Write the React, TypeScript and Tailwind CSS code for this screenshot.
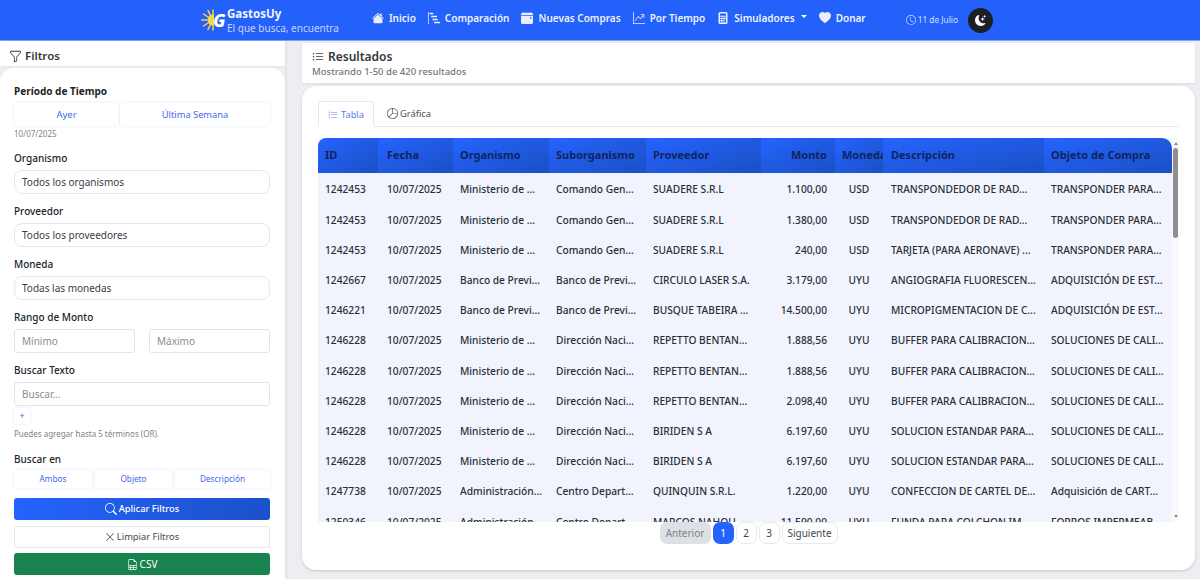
import React from "react";
import { BsHouseFill, BsBarChartSteps, BsCalendarEventFill, BsGraphUpArrow, BsCalculatorFill, BsHeartFill, BsClock, BsMoonStarsFill, BsFunnel, BsListUl, BsPieChart, BsSearch, BsXLg, BsFileEarmarkSpreadsheet } from "react-icons/bs";

const rows = [
  ["1242453","Ministerio de ...","Comando Gen...","SUADERE S.R.L","1.100,00","USD","TRANSPONDEDOR DE RAD...","TRANSPONDER PARA..."],
  ["1242453","Ministerio de ...","Comando Gen...","SUADERE S.R.L","1.380,00","USD","TRANSPONDEDOR DE RAD...","TRANSPONDER PARA..."],
  ["1242453","Ministerio de ...","Comando Gen...","SUADERE S.R.L","240,00","USD","TARJETA (PARA AERONAVE) ...","TRANSPONDER PARA..."],
  ["1242667","Banco de Previ...","Banco de Previ...","CIRCULO LASER S.A.","3.179,00","UYU","ANGIOGRAFIA FLUORESCEN...","ADQUISICIÓN DE EST..."],
  ["1246221","Banco de Previ...","Banco de Previ...","BUSQUE TABEIRA ...","14.500,00","UYU","MICROPIGMENTACION DE C...","ADQUISICIÓN DE EST..."],
  ["1246228","Ministerio de ...","Dirección Naci...","REPETTO BENTAN...","1.888,56","UYU","BUFFER PARA CALIBRACION...","SOLUCIONES DE CALI..."],
  ["1246228","Ministerio de ...","Dirección Naci...","REPETTO BENTAN...","1.888,56","UYU","BUFFER PARA CALIBRACION...","SOLUCIONES DE CALI..."],
  ["1246228","Ministerio de ...","Dirección Naci...","REPETTO BENTAN...","2.098,40","UYU","BUFFER PARA CALIBRACION...","SOLUCIONES DE CALI..."],
  ["1246228","Ministerio de ...","Dirección Naci...","BIRIDEN S A","6.197,60","UYU","SOLUCION ESTANDAR PARA...","SOLUCIONES DE CALI..."],
  ["1246228","Ministerio de ...","Dirección Naci...","BIRIDEN S A","6.197,60","UYU","SOLUCION ESTANDAR PARA...","SOLUCIONES DE CALI..."],
  ["1247738","Administración...","Centro Depart...","QUINQUIN S.R.L.","1.220,00","UYU","CONFECCION DE CARTEL DE...","Adquisición de CART..."],
  ["1250346","Administración...","Centro Depart...","MARCOS NAHOU","11.590,00","UYU","FUNDA PARA COLCHON IM...","FORROS IMPERMEAB..."],
];

const headers: [string, string][] = [
  ["ID", "w-[60px] px-[7px] text-left"],
  ["Fecha", "w-[75px] pl-[9px] pr-[5px] text-left"],
  ["Organismo", "w-[96px] px-[7px] text-left"],
  ["Suborganismo", "w-[97px] px-[7px] text-left"],
  ["Proveedor", "w-[115px] px-[7px] text-left"],
  ["Monto", "w-[74px] pl-[7px] pr-[8px] text-right"],
  ["Moneda", "w-[48px] px-[7px] text-left"],
  ["Descripción", "w-[161px] px-[8px] text-left"],
  ["Objeto de Compra", "w-[128px] px-[7px] text-left"],
];

function NavItem({ icon, label, caret }: { icon: React.ReactNode; label: string; caret?: boolean }) {
  return (
    <a className="flex items-center gap-[5px] text-[10px] font-semibold text-[#eef3ff]">
      <span className="text-[12px] text-[#e8eeff]">{icon}</span>
      {label}
      {caret && <span className="ml-[1px] mb-[3px] h-0 w-0 border-x-[3px] border-t-[3px] border-x-transparent border-t-white" />}
    </a>
  );
}

function Label({ children }: { children: React.ReactNode }) {
  return <div className="mb-[5px] text-[10px] font-medium leading-[14px] text-[#212529]">{children}</div>;
}

function Pill({ children }: { children: React.ReactNode }) {
  return <div className="flex h-[24px] items-center rounded-[8px] border border-[#e6e8eb] bg-white pl-[7px] text-[10px] text-[#3a4046]">{children}</div>;
}

function Field({ children }: { children: React.ReactNode }) {
  return <div className="flex h-[24px] flex-1 items-center rounded-[3px] border border-[#e2e4e8] pl-[7px] text-[10px] text-[#888e94]">{children}</div>;
}

function Toggle({ children, className }: { children: React.ReactNode; className: string }) {
  return <div className={`flex items-center justify-center rounded-[3px] bg-white text-[#3f68ee] shadow-[0_0_3px_rgba(60,100,220,0.14)] ${className}`}>{children}</div>;
}

export default function App() {
  return (
    <div className="flex h-[579px] w-[1200px] flex-col overflow-hidden bg-[#eceef1] font-['Noto_Sans',sans-serif]">
      <header className="flex h-[41px] shrink-0 items-center border-b border-[#7fa2ff] bg-[#2461fb] pl-[201px]">
        <svg viewBox="0 0 13 24" className="h-[24px] w-[13px] shrink-0">
          <g stroke="#f7d54a" strokeWidth="1.5" strokeLinecap="round">
            <path d="M12 2 L12 7" /><path d="M7 2.5 L9.5 7.5" /><path d="M2.5 6 L7 9" /><path d="M0.8 12 L6 12" /><path d="M2.5 18 L7 15" /><path d="M7 21.5 L9.5 16.5" /><path d="M12 22 L12 17" />
          </g>
          <circle cx="12" cy="12" r="5.5" fill="#f7d54a" />
        </svg>
        <span className="ml-[-1px] mr-[2px] inline-block w-[12px] text-[18px] font-extrabold italic leading-none text-white">G</span>
        <div className="mt-[2px] flex flex-col leading-none">
          <span className="text-[11.5px] font-bold leading-[14px] text-[#f3f6ff]">GastosUy</span>
          <span className="text-[10px] leading-[14px] text-[#c4d4ff]">El que busca, encuentra</span>
        </div>
        <nav className="ml-[33px] flex items-center gap-[12px] pb-[4px]">
          <NavItem icon={<BsHouseFill />} label="Inicio" />
          <NavItem icon={<BsBarChartSteps />} label="Comparación" />
          <NavItem icon={<BsCalendarEventFill />} label="Nuevas Compras" />
          <NavItem icon={<BsGraphUpArrow />} label="Por Tiempo" />
          <NavItem icon={<BsCalculatorFill />} label="Simuladores" caret />
          <NavItem icon={<BsHeartFill />} label="Donar" />
        </nav>
        <div className="ml-[40px] flex items-center gap-[2px] text-[8.3px] text-[#d5e0ff]"><BsClock className="text-[10px]" />11 de Julio</div>
        <button className="ml-[10px] flex h-[25px] w-[25px] items-center justify-center rounded-full bg-[#1c1f26] text-[11px] text-white"><BsMoonStarsFill /></button>
      </header>

      <div className="flex min-h-0 flex-1">
        <aside className="flex w-[285px] shrink-0 flex-col bg-[#eceef1] shadow-[1px_0_3px_rgba(0,0,0,0.08)]">
          <div className="flex h-[26px] shrink-0 items-center gap-[3px] border-b border-[#e5e7ea] bg-white pl-[9px] pt-[5px] text-[11.5px] font-semibold text-[#33373c]">
            <BsFunnel className="text-[13px]" /> Filtros
          </div>
          <div className="mt-[1px] flex flex-1 flex-col rounded-t-[14px] bg-white pl-[14px] pr-[15px] pt-[16px]">
            <div className="mb-[5px] text-[10px] font-bold leading-[14px] text-[#212529]">Período de Tiempo</div>
            <div className="flex h-[23px] gap-[1px]">
              <Toggle className="w-[105px] pt-[1px] text-[9.5px]">Ayer</Toggle>
              <Toggle className="flex-1 pt-[1px] text-[9.3px]">Última Semana</Toggle>
            </div>
            <div className="mt-[2px] text-[8px] leading-[12px] text-[#80868c]">10/07/2025</div>
            <div className="mt-[11px]"><Label>Organismo</Label><Pill>Todos los organismos</Pill></div>
            <div className="mt-[10px]"><Label>Proveedor</Label><Pill>Todos los proveedores</Pill></div>
            <div className="mt-[10px]"><Label>Moneda</Label><Pill>Todas las monedas</Pill></div>
            <div className="mt-[10px]">
              <Label>Rango de Monto</Label>
              <div className="flex gap-[14px]">
                <Field>Mínimo</Field>
                <Field>Máximo</Field>
              </div>
            </div>
            <div className="mt-[10px]">
              <Label>Buscar Texto</Label>
              <Field>Buscar...</Field>
            </div>
            <Toggle className="mt-[2px] h-[16px] w-[16px] text-[9px]">+</Toggle>
            <div className="mt-[4px] text-[8px] leading-[12px] text-[#7d838a]">Puedes agregar hasta 5 términos (OR).</div>
            <div className="mt-[12px] text-[10px] font-medium leading-[14px] text-[#212529]">Buscar en</div>
            <div className="mt-[4px] flex h-[18px] gap-[3px]">
              <Toggle className="w-[78px] text-[8.2px]">Ambos</Toggle>
              <Toggle className="w-[77px] text-[8.2px]">Objeto</Toggle>
              <Toggle className="flex-1 text-[8.2px]">Descripción</Toggle>
            </div>
            <button className="mt-[10px] flex h-[22px] shrink-0 items-center justify-center gap-[2px] rounded-[3px] bg-gradient-to-r from-[#2563ff] to-[#1b51c9] text-[9.3px] font-medium text-white"><BsSearch className="text-[12px]" />Aplicar Filtros</button>
            <button className="mt-[6px] flex h-[22px] shrink-0 items-center justify-center gap-[2px] rounded-[3px] border border-[#e6e8eb] bg-white text-[9.3px] text-[#42474d]"><BsXLg className="text-[10px]" />Limpiar Filtros</button>
            <button className="mt-[5px] flex h-[22px] shrink-0 items-center justify-center gap-[2px] rounded-[3px] bg-[#198350] text-[10px] text-white"><BsFileEarmarkSpreadsheet className="text-[11px]" />CSV</button>
          </div>
        </aside>

        <main className="flex min-w-0 flex-1 flex-col pl-[17px] pr-[5px] pt-[2px]">
          <div className="h-[41px] shrink-0 rounded-t-[3px] border-b border-[#dfe1e4] bg-white pl-[10px] pt-[5px] shadow-[0_0_2px_rgba(0,0,0,0.1)]">
            <div className="flex items-center gap-[4px] text-[12px] font-semibold leading-[18px] text-[#33373c]"><BsListUl className="text-[12px]" />Resultados</div>
            <div className="text-[9.5px] font-medium leading-[12px] text-[#71777d]">Mostrando 1-50 de 420 resultados</div>
          </div>
          <div className="mt-[2px] flex h-[484px] flex-col rounded-[14px] bg-white pl-[16px] pr-[16px] pt-[15px] shadow-[0_1px_3px_rgba(0,0,0,0.16)]">
            <div className="flex h-[26px] shrink-0 items-end border-b border-[#e8e9ec]">
              <div className="z-10 -mb-[1px] flex h-[26px] w-[56px] items-center justify-center gap-[3px] rounded-t-[3px] border border-[#e8e9ec] border-b-white bg-white pt-[1px] text-[9.3px] text-[#5a7ce6]"><BsListUl className="text-[10px]" />Tabla</div>
              <div className="flex h-[26px] w-[70px] items-center justify-center gap-[2px] pt-[1px] text-[9.3px] text-[#4a4f55]"><BsPieChart className="text-[11px]" />Gráfica</div>
            </div>
            <div className="mt-[11px] flex h-[384px] shrink-0">
              <div className="h-full w-[854px] overflow-hidden rounded-tl-[8px] bg-[#f1f4fd]">
                <table className="w-[854px] table-fixed border-collapse">
                  <thead>
                    <tr className="h-[35px]">
                      {headers.map(([h, c]) => (
                        <th key={h} className={`${c} overflow-hidden whitespace-nowrap bg-gradient-to-br from-[#2563ff] to-[#1a50c4] text-[11px] font-bold text-[#10245f] last:rounded-tr-[10px]`}>{h}</th>
                      ))}
                    </tr>
                  </thead>
                  <tbody>
                    {rows.map((r, i) => (
                      <tr key={i} className="h-[30.2px] text-[10.2px] font-medium text-[#2a2f35]">
                        <td className="px-[7px] pt-[4px] whitespace-nowrap">{r[0]}</td>
                        <td className="pl-[9px] pt-[4px] whitespace-nowrap">10/07/2025</td>
                        <td className="px-[7px] pt-[4px] whitespace-nowrap overflow-hidden">{r[1]}</td>
                        <td className="px-[7px] pt-[4px] whitespace-nowrap overflow-hidden">{r[2]}</td>
                        <td className="px-[7px] pt-[4px] whitespace-nowrap overflow-hidden">{r[3]}</td>
                        <td className="pl-[7px] pr-[8px] pt-[4px] text-right whitespace-nowrap">{r[4]}</td>
                        <td className="pt-[4px] text-center whitespace-nowrap">{r[5]}</td>
                        <td className="px-[8px] pt-[4px] whitespace-nowrap overflow-hidden">{r[6]}</td>
                        <td className="px-[7px] pt-[4px] whitespace-nowrap overflow-hidden">{r[7]}</td>
                      </tr>
                    ))}
                  </tbody>
                </table>
              </div>
              <div className="flex h-full w-[7px] flex-col items-center bg-[#fafafa]">
                <span className="mt-[4px] h-0 w-0 border-x-[2.5px] border-b-[3px] border-x-transparent border-b-[#8a8a8a]" />
                <span className="mt-[3px] h-[90px] w-[5px] rounded-[3px] bg-[#8f8f8f]" />
                <span className="mt-auto mb-[4px] h-0 w-0 border-x-[2.5px] border-t-[3px] border-x-transparent border-t-[#8a8a8a]" />
              </div>
            </div>
            <div className="flex items-center justify-center gap-[2px] text-[10px]">
              <span className="flex h-[22px] w-[51px] items-center justify-center rounded-[7px] bg-[#dde0e4] text-[#7d8389]">Anterior</span>
              <span className="flex h-[22px] w-[21px] items-center justify-center rounded-[7px] bg-[#2563ff] text-white">1</span>
              <span className="flex h-[22px] w-[21px] items-center justify-center rounded-[7px] border border-[#e8eaec] bg-white text-[#41464c]">2</span>
              <span className="flex h-[22px] w-[21px] items-center justify-center rounded-[7px] border border-[#e8eaec] bg-white text-[#41464c]">3</span>
              <span className="flex h-[22px] w-[56px] items-center justify-center rounded-[7px] border border-[#e8eaec] bg-white text-[#41464c]">Siguiente</span>
            </div>
          </div>
        </main>
      </div>
    </div>
  );
}
